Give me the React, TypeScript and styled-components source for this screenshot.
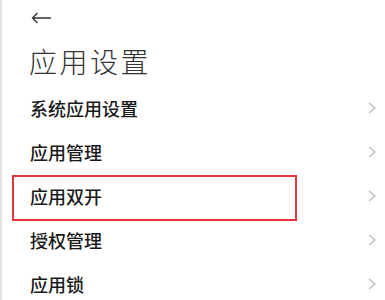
import { createGlobalStyle, styled } from 'styled-components'

const GlobalStyle = createGlobalStyle`
  html, body {
    margin: 0;
    padding: 0;
    background: #fff;
  }
  body {
    font-family: "Noto Sans CJK SC", "Noto Sans", sans-serif;
  }
`

const Screen = styled.div`
  width: 385px;
  height: 300px;
  box-sizing: border-box;
  border-left: 2px solid #e2e2e2;
  overflow: hidden;
  background: #fff;
`

const Header = styled.div`
  height: 36px;
  display: flex;
  align-items: center;
  padding-left: 29px;
`

const BackButton = styled.button`
  border: 0;
  padding: 0;
  background: none;
  display: flex;
  cursor: pointer;
`

const Title = styled.h1`
  margin: 0;
  height: 50px;
  display: flex;
  align-items: center;
  padding-left: 27px;
  font-size: 28px;
  font-weight: 300;
  letter-spacing: 2.5px;
  color: #333;
`

const List = styled.ul`
  list-style: none;
  margin: 0;
  padding: 0;
`

const Row = styled.li<{ $highlight?: boolean }>`
  position: relative;
  height: 44px;
  display: flex;
  align-items: center;
  justify-content: space-between;
  padding: 0 9px 0 28px;

  ${({ $highlight }) =>
    $highlight &&
    `
    &::after {
      content: '';
      position: absolute;
      left: 10px;
      top: 1px;
      width: 285px;
      height: 46px;
      box-sizing: border-box;
      border: 2px solid #e8353e;
      pointer-events: none;
    }
  `}
`

const Label = styled.span`
  font-size: 18px;
  font-weight: 500;
  color: #1a1a1a;
`

const Chevron = () => (
  <svg width="8" height="12" viewBox="0 0 8 12">
    <polyline
      points="1,1 7,6 1,11"
      fill="none"
      stroke="#b8b8b8"
      strokeWidth="1.2"
    />
  </svg>
)

const items = ['系统应用设置', '应用管理', '应用双开', '授权管理', '应用锁']

export default function App() {
  return (
    <>
      <GlobalStyle />
      <Screen>
        <Header>
          <BackButton aria-label="返回">
            <svg width="21" height="12" viewBox="0 0 21 12">
              <path
                d="M20 6H1.5M6.5 1L1.5 6l5 5"
                fill="none"
                stroke="#333"
                strokeWidth="1.4"
              />
            </svg>
          </BackButton>
        </Header>
        <Title>应用设置</Title>
        <List>
          {items.map((item) => (
            <Row key={item} $highlight={item === '应用双开'}>
              <Label>{item}</Label>
              <Chevron />
            </Row>
          ))}
        </List>
      </Screen>
    </>
  )
}
